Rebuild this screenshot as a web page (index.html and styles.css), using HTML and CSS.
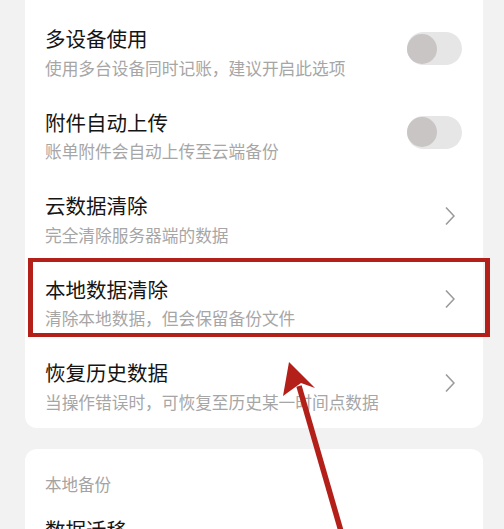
FILE: index.html
```html
<!DOCTYPE html>
<html lang="zh-CN">
<head>
  <meta charset="UTF-8" />
  <meta name="viewport" content="width=device-width, initial-scale=1.0" />
  <title>数据设置</title>
  <link rel="stylesheet" href="styles.css">
</head>
<body>
<div class="screen">
  <!-- 同步设置 -->
  <div class="card card--first">
    <div class="row">
      <div class="row__text">
        <div class="row__title">多设备使用</div>
        <div class="row__desc">使用多台设备同时记账，建议开启此选项</div>
      </div>
      <span class="switch"><span class="switch__knob"></span></span>
    </div>
    <div class="row">
      <div class="row__text">
        <div class="row__title">附件自动上传</div>
        <div class="row__desc">账单附件会自动上传至云端备份</div>
      </div>
      <span class="switch"><span class="switch__knob"></span></span>
    </div>
    <div class="row">
      <div class="row__text">
        <div class="row__title">云数据清除</div>
        <div class="row__desc">完全清除服务器端的数据</div>
      </div>
      <svg class="chevron" viewBox="0 0 10 20"><path d="M1 1.5 L9 10 L1 18.5" /></svg>
    </div>
    <div class="row row--marked">
      <div class="row__text">
        <div class="row__title">本地数据清除</div>
        <div class="row__desc">清除本地数据，但会保留备份文件</div>
      </div>
      <svg class="chevron" viewBox="0 0 10 20"><path d="M1 1.5 L9 10 L1 18.5" /></svg>
    </div>
    <div class="row">
      <div class="row__text">
        <div class="row__title">恢复历史数据</div>
        <div class="row__desc">当操作错误时，可恢复至历史某一时间点数据</div>
      </div>
      <svg class="chevron" viewBox="0 0 10 20"><path d="M1 1.5 L9 10 L1 18.5" /></svg>
    </div>
  </div>

  <!-- 本地备份 -->
  <div class="card">
    <div class="card__label">本地备份</div>
    <div class="row">
      <div class="row__text">
        <div class="row__title">数据迁移</div>
        <div class="row__desc">将数据迁移到新设备</div>
      </div>
      <svg class="chevron" viewBox="0 0 10 20"><path d="M1 1.5 L9 10 L1 18.5" /></svg>
    </div>
  </div>

  <!-- 标注箭头 -->
  <svg class="annotation" viewBox="0 0 504 529">
    <line x1="299" y1="386" x2="345" y2="545" />
    <polygon points="289,362 315,388 301,383 283,396" />
  </svg>
</div>
</body>
</html>
```

FILE: styles.css
```css
* {
  box-sizing: border-box;
}

body {
  margin: 0;
  background: #f2f2f2;
  font-family: "Noto Sans CJK SC", "Noto Sans", sans-serif;
}

.screen {
  position: relative;
  width: 504px;
  height: 529px;
  overflow: hidden;
  padding: 0 21px 0 25px;
}

.card {
  background: #fff;
  border-radius: 12px;
  margin-bottom: 21px;
}
.card--first {
  margin-top: -26px;
  padding-top: 36px;
}

.card__label {
  padding: 23px 20px 0;
  margin-bottom: 5px;
  font-size: 16.5px;
  line-height: 24px;
  color: #a3a3a3;
}

.row {
  display: flex;
  align-items: center;
  padding: 14px 21px 14px 20px;
}
.row__text {
  flex: 1;
  display: flex;
  flex-direction: column;
  gap: 3.5px;
}
.row__title {
  font-size: 20.5px;
  line-height: 28px;
  color: #151515;
}
.row__desc {
  font-size: 16.7px;
  line-height: 24px;
  color: #a6a6a6;
  white-space: nowrap;
}

.row--marked {
  position: relative;
}
.row--marked::after {
  content: "";
  position: absolute;
  top: -3px;
  bottom: 7px;
  left: 3px;
  right: -7px;
  border: 5px solid #b3201a;
  border-top-width: 4px;
  border-bottom-width: 4px;
}

.switch {
  position: relative;
  width: 55px;
  height: 33px;
  border-radius: 17px;
  background: #e6e6e6;
  margin-top: -6px;
}
.switch__knob {
  position: absolute;
  top: 1.5px;
  left: 0;
  width: 30px;
  height: 30px;
  border-radius: 50%;
  background: #c9c5c5;
}

.chevron {
  width: 10px;
  height: 20px;
  margin-right: 7px;
  margin-top: -6px;
}
.chevron path {
  fill: none;
  stroke: #9a9a9a;
  stroke-width: 1.6;
}

.annotation {
  position: absolute;
  top: 0;
  left: 0;
  width: 504px;
  height: 529px;
  pointer-events: none;
}
.annotation line {
  stroke: #b3201a;
  stroke-width: 5.5;
}
.annotation polygon {
  fill: #b3201a;
}
```
